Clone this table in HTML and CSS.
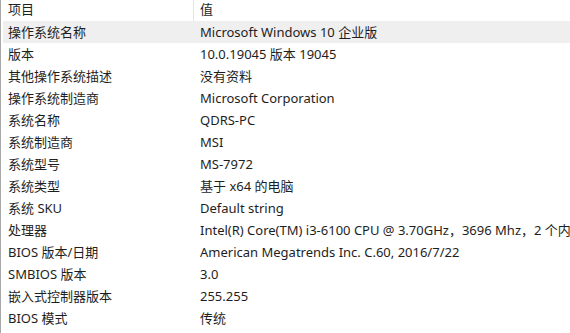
FILE: index.html
```html
<!DOCTYPE html>
<html lang="zh-CN">
<head>
<meta charset="utf-8">
<title>系统信息</title>
<link rel="stylesheet" href="styles.css">
</head>
<body>
<div class="list">
  <div class="head">
    <div class="c1">项目</div>
    <div class="c2">值</div>
  </div>
  <div class="row sel"><div class="c1">操作系统名称</div><div class="c2">Microsoft Windows 10 企业版</div></div>
  <div class="row"><div class="c1">版本</div><div class="c2">10.0.19045 版本 19045</div></div>
  <div class="row"><div class="c1">其他操作系统描述</div><div class="c2">没有资料</div></div>
  <div class="row"><div class="c1">操作系统制造商</div><div class="c2">Microsoft Corporation</div></div>
  <div class="row"><div class="c1">系统名称</div><div class="c2">QDRS-PC</div></div>
  <div class="row"><div class="c1">系统制造商</div><div class="c2">MSI</div></div>
  <div class="row"><div class="c1">系统型号</div><div class="c2">MS-7972</div></div>
  <div class="row"><div class="c1">系统类型</div><div class="c2">基于 x64 的电脑</div></div>
  <div class="row"><div class="c1">系统 SKU</div><div class="c2">Default string</div></div>
  <div class="row"><div class="c1">处理器</div><div class="c2">Intel(R) Core(TM) i3-6100 CPU @ 3.70GHz，3696 Mhz，2 个内核，4 个逻辑处理器</div></div>
  <div class="row"><div class="c1">BIOS 版本/日期</div><div class="c2">American Megatrends Inc. C.60, 2016/7/22</div></div>
  <div class="row"><div class="c1">SMBIOS 版本</div><div class="c2">3.0</div></div>
  <div class="row"><div class="c1">嵌入式控制器版本</div><div class="c2">255.255</div></div>
  <div class="row"><div class="c1">BIOS 模式</div><div class="c2">传统</div></div>
  <div class="row"><div class="c1">主板制造商</div><div class="c2">MSI</div></div>
</div>
</body>
</html>
```
FILE: styles.css
```css
html, body {
  margin: 0;
  padding: 0;
  background: #ffffff;
  overflow: hidden;
}
body {
  width: 570px;
  height: 333px;
  font-family: "Noto Sans", "Noto Sans CJK SC", sans-serif;
  font-size: 13px;
  color: #1e1e1e;
}
.list {
  height: 333px;
  border-left: 1px solid #a8a8a8;
  padding-left: 2px;
  overflow: hidden;
}
.head, .row {
  display: flex;
  white-space: nowrap;
}
.head {
  height: 21px;
  line-height: 19px;
}
.row {
  height: 22px;
  line-height: 22px;
}
.sel {
  background: #efefef;
}
.c1 {
  width: 190px;
  flex: none;
  padding-left: 5px;
  box-sizing: border-box;
  overflow: hidden;
}
.c2 {
  flex: 1;
  padding-left: 6px;
  overflow: hidden;
}
.head .c2 {
  border-left: 1px solid #e5e5e5;
}
.row .c2 {
  padding-left: 7px;
}
```
